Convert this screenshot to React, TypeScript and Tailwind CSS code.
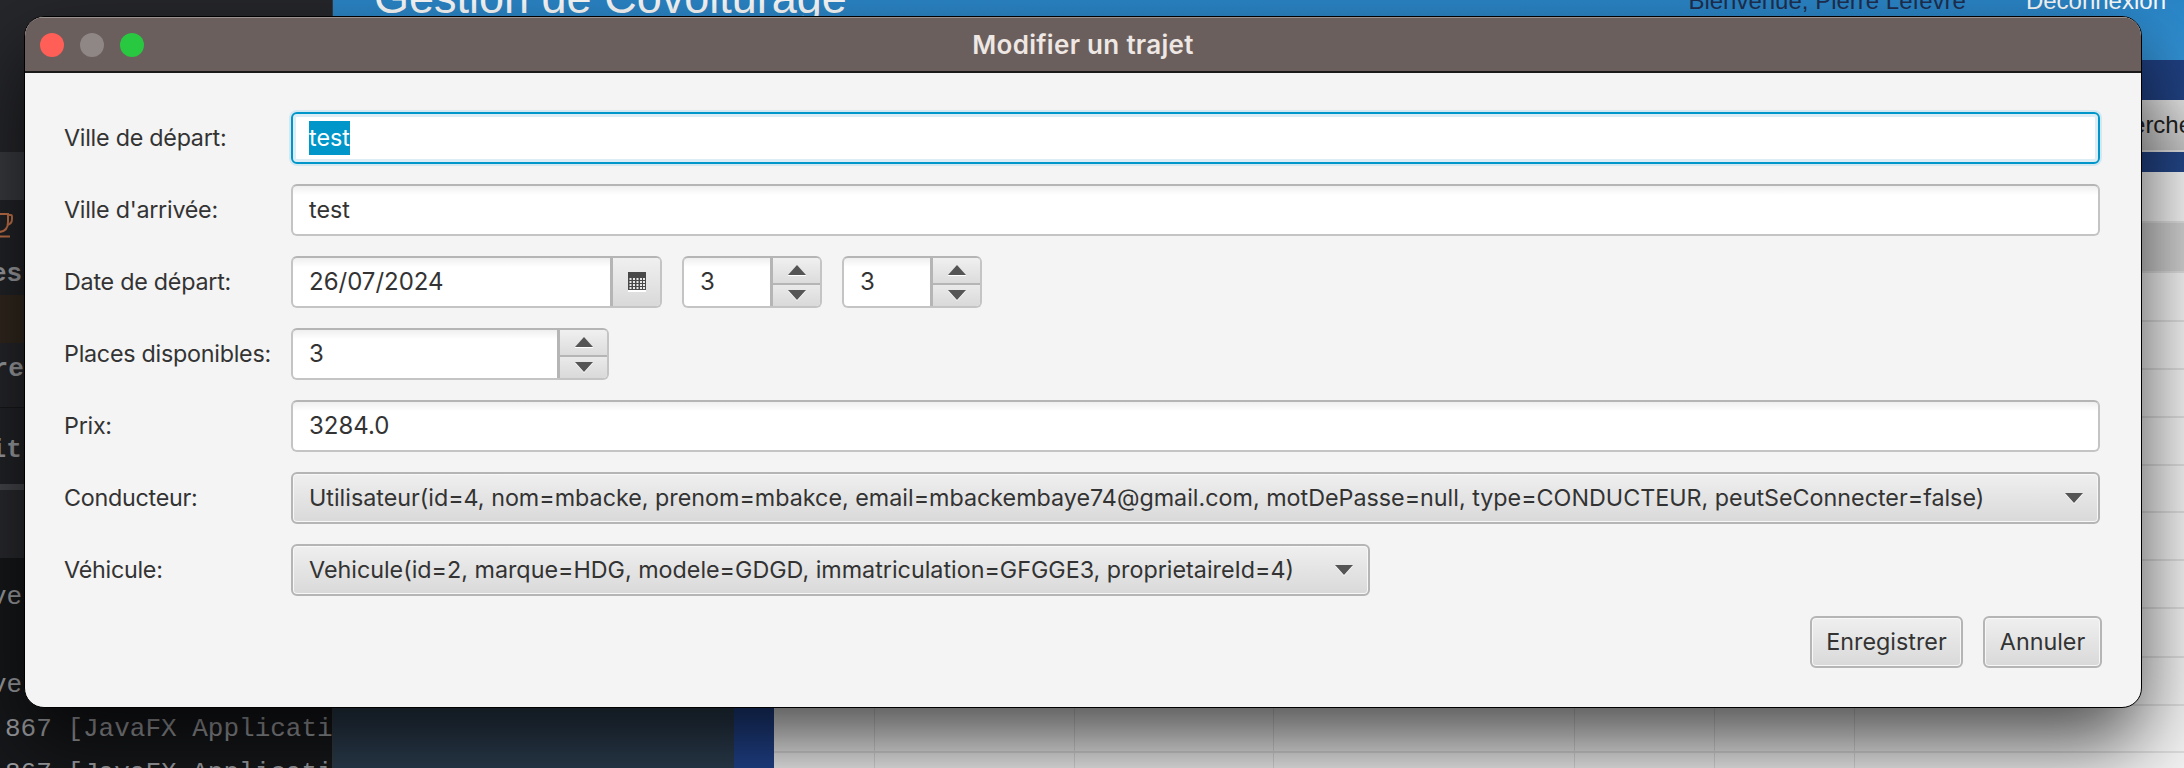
const textSize = "text-[23.3px] text-[#333333]";
const digitSize = "text-[24px] text-[#333333]";

const fieldBox =
	"h-[52px] rounded-[6px] border-2 border-[#c4c4c4] border-t-[#b5b5b5] bg-[linear-gradient(#efefef,#ffffff_9px)] flex items-center pl-[16px]";
const buttonFace =
	"bg-[linear-gradient(#efefef,#d9d9d9)] border-2 border-[#b5b5b5] shadow-[inset_0_0_0_1px_#f7f7f7]";

const Triangle = ({ up = false }: { up?: boolean }) => (
	<svg width="18" height="11" viewBox="0 0 18 11" className="block">
		{up ? (
			<>
				<path d="M0 10.5h18" stroke="#ffffff" />
				<path d="M9 0l9 10H0z" fill="#555555" />
			</>
		) : (
			<>
				<path d="M9 11L0 1h18z" fill="#ffffff" />
				<path d="M9 10L0 0h18z" fill="#555555" />
			</>
		)}
	</svg>
);

const CalendarGlyph = () => (
	<svg width="18" height="20" viewBox="0 0 18 20" className="block">
		<rect width="18" height="18" fill="#484848" />
		<rect y="18" width="18" height="2" fill="#ffffff" />
		{[6, 9, 12, 15].flatMap((y) =>
			[1.5, 5, 8.5, 12, 15].map((x) => <rect key={`${x}-${y}`} x={x} y={y} width="2" height="2" fill="#e8e8e8" />),
		)}
	</svg>
);

const CupGlyph = () => (
	<svg width="28" height="26" viewBox="0 0 28 26" className="block -ml-[15px]" fill="none" stroke="#c9764b" strokeWidth="2">
		<path d="M1 2h22v8q0 10-10 10h-2Q1 20 1 10z" />
		<path d="M23 3h3q1 0 1 2v2q0 5-5 6" />
		<path d="M0 24.5h25" />
	</svg>
);

const Spinner = ({ value, width }: { value: string; width: string }) => (
	<div className={`${width} h-[52px] flex rounded-[6px] border-2 border-[#c4c4c4] border-t-[#b5b5b5] overflow-hidden bg-[linear-gradient(#efefef,#ffffff_9px)]`}>
		<div className={`flex-1 flex items-center pl-[16px] ${digitSize}`}>{value}</div>
		<div className="w-[50px] flex flex-col border-l-[3px] border-[#b5b5b5]">
			<div className="h-[27px] flex items-center justify-center border-b-[2px] border-[#b5b5b5] bg-[linear-gradient(#f0f0f0,#dcdcdc)]">
				<Triangle up />
			</div>
			<div className="flex-1 flex items-center justify-center bg-[linear-gradient(#eaeaea,#d9d9d9)]">
				<Triangle />
			</div>
		</div>
	</div>
);

const Combo = ({ text, width }: { text: string; width: string }) => (
	<div className={`${width} h-[52px] rounded-[6px] ${buttonFace} flex items-center justify-between pl-[16px] pr-[15px] ${textSize}`}>
		<span className="whitespace-nowrap">{text}</span>
		<Triangle />
	</div>
);

const Row = ({ label, children }: { label: string; children: React.ReactNode }) => (
	<div className="flex items-center h-[52px]">
		<div className={`w-[227px] ${textSize} tracking-[-0.25px] whitespace-nowrap`}>{label}</div>
		<div className="flex-1 flex gap-[20px]">{children}</div>
	</div>
);

const Dialog = () => (
	<div className="absolute left-[24px] top-[16px] w-[2118px] h-[692px] rounded-[20px] border border-black bg-[#f4f4f4] overflow-hidden shadow-[0_35px_80px_rgba(0,0,0,0.7)] font-['Inter',sans-serif]">
		<div className="relative h-[56px] bg-[#6a5f5c] border-t border-[#99928e] border-b-2 border-b-[#1a1a1a] flex items-center justify-center">
			<div className="absolute left-[15px] top-[15px] flex gap-[16px]">
				<div className="w-[24px] h-[24px] rounded-full bg-[#ff5f57]" />
				<div className="w-[24px] h-[24px] rounded-full bg-[#8f8785]" />
				<div className="w-[24px] h-[24px] rounded-full bg-[#28c840]" />
			</div>
			<span className="text-[26px] font-semibold tracking-[0.3px] text-[#eee7e4]">Modifier un trajet</span>
		</div>
		<div className="pl-[39px] pr-[41px] pt-[39px] flex flex-col gap-[20px]">
			<Row label="Ville de départ:">
				<div className={`flex-1 h-[52px] rounded-[6px] border-2 border-[#0096c9] bg-white shadow-[inset_0_0_0_3px_#dcedf5,0_0_0_2px_#d4e8f2] flex items-center pl-[16px] ${textSize}`}>
					<span className="bg-[#0096c9] text-white h-[34px] leading-[34px]">test</span>
				</div>
			</Row>
			<Row label="Ville d'arrivée:">
				<div className={`flex-1 ${fieldBox} ${textSize}`}>test</div>
			</Row>
			<Row label="Date de départ:">
				<div className="w-[371px] h-[52px] flex rounded-[6px] border-2 border-[#c4c4c4] border-t-[#b5b5b5] overflow-hidden bg-[linear-gradient(#efefef,#ffffff_9px)]">
					<div className={`flex-1 flex items-center pl-[16px] ${digitSize}`}>26/07/2024</div>
					<div className="w-[50px] flex items-center justify-center border-l-[3px] border-[#b5b5b5] bg-[linear-gradient(#f0f0f0,#d9d9d9)]">
						<CalendarGlyph />
					</div>
				</div>
				<Spinner value="3" width="w-[140px]" />
				<Spinner value="3" width="w-[140px]" />
			</Row>
			<Row label="Places disponibles:">
				<Spinner value="3" width="w-[318px]" />
			</Row>
			<Row label="Prix:">
				<div className={`flex-1 ${fieldBox} ${digitSize}`}>3284.0</div>
			</Row>
			<Row label="Conducteur:">
				<Combo
					width="flex-1"
					text="Utilisateur(id=4, nom=mbacke, prenom=mbakce, email=mbackembaye74@gmail.com, motDePasse=null, type=CONDUCTEUR, peutSeConnecter=false)"
				/>
			</Row>
			<Row label="Véhicule:">
				<Combo
					width="w-[1079px]"
					text="Vehicule(id=2, marque=HDG, modele=GDGD, immatriculation=GFGGE3, proprietaireId=4)"
				/>
			</Row>
			<div className="flex justify-end gap-[20px] -mr-[2px]">
				<div className={`w-[153px] h-[52px] rounded-[6px] ${buttonFace} flex items-center justify-center ${textSize}`}>
					Enregistrer
				</div>
				<div className={`w-[119px] h-[52px] rounded-[6px] ${buttonFace} flex items-center justify-center ${textSize}`}>
					Annuler
				</div>
			</div>
		</div>
	</div>
);

const IdeStrip = () => (
	<div className="w-[333px] shrink-0 flex flex-col border-r border-[#3a3d42] text-[#a3a4a8] text-[26px] font-['Liberation_Mono',monospace] overflow-hidden">
		<div className="h-[152px] shrink-0 bg-[#26272b]" />
		<div className="h-[48px] shrink-0 bg-[#3b3c41]" />
		<div className="h-[95px] shrink-0 bg-[#232428] pt-[12px]">
			<CupGlyph />
			<div className="mt-[17px] -ml-[9px] font-bold">es</div>
		</div>
		<div className="h-[48px] shrink-0 bg-[#33291f]" />
		<div className="h-[64px] shrink-0 bg-[#26272b] pt-[7px] font-bold">
			<div className="-ml-[23px]">ore</div>
		</div>
		<div className="h-[77px] shrink-0 bg-[#232428] border-t border-[#17181a] pt-[23px] font-bold">
			<div className="-ml-[25px]">bit</div>
		</div>
		<div className="h-[6px] shrink-0 bg-[#47484c]" />
		<div className="h-[68px] shrink-0 bg-[#2a2b2f]" />
		<div className="flex-1 min-h-0 overflow-hidden bg-[#17181b] pt-[17px] leading-[44px]">
			<div className="-ml-[9px]">ve</div>
			<div>&nbsp;</div>
			<div className="-ml-[9px]">ve</div>
			<div className="pl-[5px] whitespace-nowrap">867 [JavaFX Applicati</div>
			<div className="pl-[5px] whitespace-nowrap">867 [JavaFX Applicati</div>
		</div>
	</div>
);

const rowHeights = [51, 50, 49, 48, 48, 48, 47, 48, 48, 49, 48, 47, 48];

const MainApp = () => (
	<div className="flex-1 min-w-0 flex flex-col overflow-hidden font-['Liberation_Sans',sans-serif]">
		<div className="h-[60px] shrink-0 bg-[linear-gradient(#2a86c8,#3291d4)] flex items-start pl-[41px] pr-[18px] overflow-hidden">
			<span className="-mt-[30px] text-[45px] leading-[56px] text-white whitespace-nowrap">Gestion de Covoiturage</span>
			<span className="ml-auto -mt-[15px] text-[24px] leading-[32px] text-[#1f2f50] whitespace-nowrap">Bienvenue, Pierre Lefèvre</span>
			<span className="ml-[60px] -mt-[15px] text-[24px] leading-[32px] text-white whitespace-nowrap">Déconnexion</span>
		</div>
		<div className="h-[112px] shrink-0 bg-[linear-gradient(#1f3f80,#234587)] pt-[40px] flex justify-end">
			<div className="w-[150px] h-[52px] -mr-[26px] bg-[linear-gradient(#e4e4e4,#c4c4c4)] border-b-2 border-[#e0e0e0] flex items-center pl-[16px] text-[24px] text-[#222222]">
				Rechercher
			</div>
		</div>
		<div className="flex-1 flex min-h-0">
			<div className="w-[401px] bg-[#2c3e50]" />
			<div className="w-[40px] bg-[#21448f]" />
			<div className="flex-1 bg-[#f4f4f4] flex flex-col">
				{rowHeights.map((height, i) => (
					<div
						key={i}
						style={{ height }}
						className={`shrink-0 grid grid-cols-[101px_200px_199px_301px_140px_140px_1fr] border-b-2 border-[#dedede] ${i === 1 ? "bg-[#d0d0d0]" : "bg-[#f4f4f4]"}`}
					>
						<div className="border-r border-[#dcdcdc]" />
						<div className="border-r border-[#dcdcdc]" />
						<div className="border-r border-[#dcdcdc]" />
						<div className="border-r border-[#dcdcdc]" />
						<div className="border-r border-[#dcdcdc]" />
						<div className="border-r border-[#dcdcdc]" />
						<div />
					</div>
				))}
			</div>
		</div>
	</div>
);

export default function App() {
	return (
		<div className="relative w-[2184px] h-[768px] overflow-hidden flex bg-[#17181b]">
			<IdeStrip />
			<MainApp />
			<Dialog />
		</div>
	);
}
